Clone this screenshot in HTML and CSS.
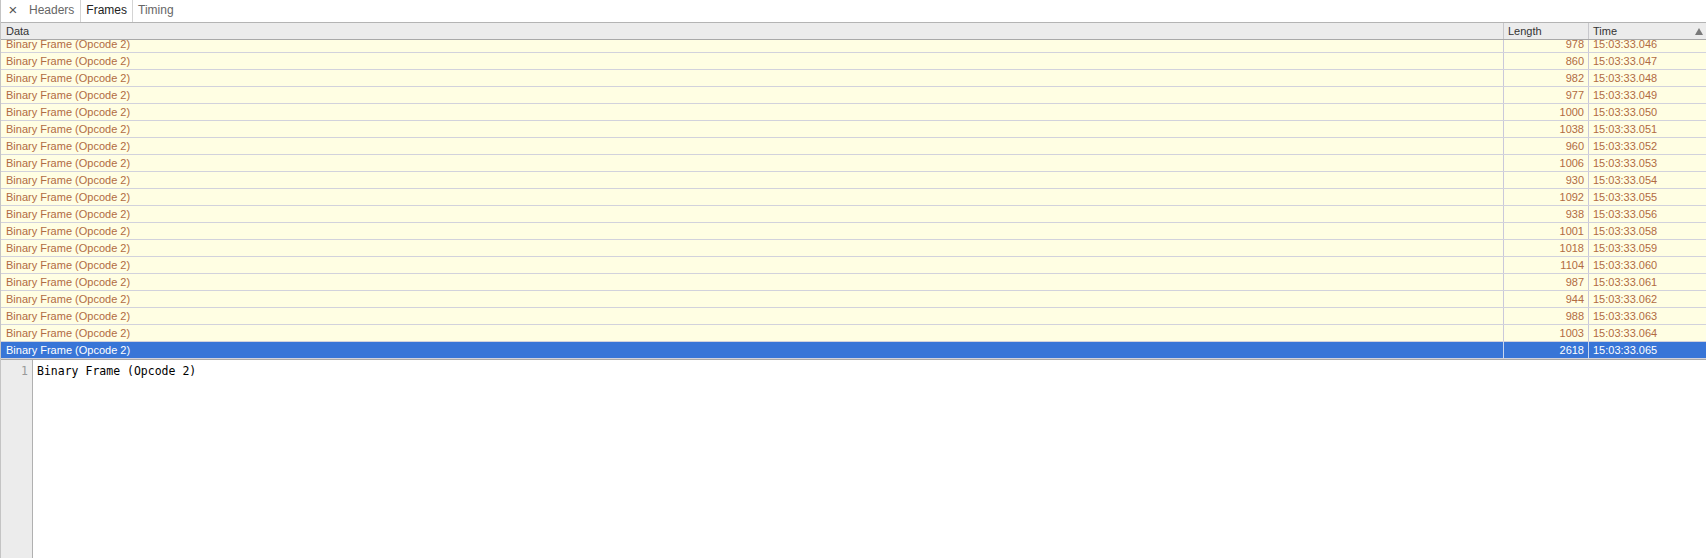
FILE: index.html
```html
<!DOCTYPE html>
<html>
<head>
<meta charset="utf-8">
<link rel="stylesheet" href="styles.css">
</head>
<body>
<div class="panel">
  <div class="tabbar">
    <span class="close">×</span>
    <span class="tab">Headers</span>
    <span class="tab tab-selected">Frames</span>
    <span class="tab">Timing</span>
  </div>
  <div class="table">
    <div class="thead">
      <div class="th th-data">Data</div>
      <div class="th col-len th-len">Length</div>
      <div class="th col-time th-time">Time<span class="sort"></span></div>
    </div>
    <div class="tbody">
      <div class="rows" id="rows"></div>
    </div>
  </div>
  <div class="editor">
    <div class="gutter"><div class="lineno">1</div></div>
    <div class="code"><div class="line">Binary Frame (Opcode 2)</div></div>
  </div>
</div>
<script src="script.js"></script>
</body>
</html>
```

FILE: script.js
```js
var data = [
  [978, "046"], [860, "047"], [982, "048"], [977, "049"], [1000, "050"],
  [1038, "051"], [960, "052"], [1006, "053"], [930, "054"], [1092, "055"],
  [938, "056"], [1001, "058"], [1018, "059"], [1104, "060"], [987, "061"],
  [944, "062"], [988, "063"], [1003, "064"], [2618, "065"]
];
var rows = document.getElementById("rows");
data.forEach(function (d, i) {
  var r = document.createElement("div");
  r.className = "row" + (i === data.length - 1 ? " selected" : "");
  r.innerHTML = '<div class="td td-data">Binary Frame (Opcode 2)</div>' +
    '<div class="td col-len num">' + d[0] + '</div>' +
    '<div class="td col-time">15:03:33.' + d[1] + '</div>';
  rows.appendChild(r);
});
```

FILE: styles.css
```css
html, body {
  margin: 0;
  padding: 0;
  background: #fff;
}
body {
  font-family: "Liberation Sans", Arial, sans-serif;
  width: 1706px;
  height: 558px;
  overflow: hidden;
}
.panel {
  height: 558px;
  display: flex;
  flex-direction: column;
  border-left: 1px solid #c4c4c4;
  box-sizing: border-box;
}
.tabbar {
  height: 22px;
  flex: none;
  display: flex;
  align-items: stretch;
  border-bottom: 1px solid #b4b4b4;
  font-size: 12px;
  line-height: 20px;
  color: #666;
}
.close {
  width: 20px;
  text-align: center;
  font-size: 15px;
  color: #555;
  padding-left: 2px;
}
.tab {
  padding: 0 5px;
  border-left: 1px solid transparent;
  border-right: 1px solid transparent;
}
.tab-selected {
  color: #222;
  border-left-color: #d4d4d4;
  border-right-color: #d4d4d4;
}
.tab-selected + .tab {
  border-left: none;
}
.table {
  flex: none;
  display: flex;
  flex-direction: column;
}
.thead, .row {
  display: grid;
  grid-template-columns: 1502px 85px 1fr;
}
.thead {
  height: 16px;
  background: #ececec;
  border-bottom: 1px solid #a9a9a9;
  font-size: 11px;
  line-height: 16px;
  color: #333;
}
.th {
  padding: 0 4px;
  box-sizing: border-box;
}
.th.col-len, .th.col-time {
  border-left: 1px solid #c8c8cc;
}
.th-time {
  display: flex;
  justify-content: space-between;
  align-items: center;
  padding-right: 3px;
}
.sort {
  width: 0;
  height: 0;
  border-left: 4px solid transparent;
  border-right: 4px solid transparent;
  border-bottom: 7px solid #7a7a7a;
}
.tbody {
  height: 319px;
  overflow: hidden;
}
.rows {
  margin-top: -4px;
}
.row {
  height: 16px;
  background: #fffee3;
  border-bottom: 1px solid #d2d2dc;
  font-size: 11px;
  line-height: 16px;
  color: #b16b42;
}
.td {
  padding: 0 4px;
  white-space: nowrap;
  overflow: hidden;
  box-sizing: border-box;
}
.th.th-data, .td.td-data {
  padding-left: 5px;
}
.td.col-len, .td.col-time {
  border-left: 1px solid #cac8da;
}
.num {
  text-align: right;
}
.row.selected {
  background: #3875d7;
  color: #fff;
}
.row.selected .td.col-len, .row.selected .td.col-time {
  border-left-color: #c8d6ee;
}
.editor {
  flex: 1;
  display: flex;
  border-top: 1px solid #a9a9a9;
  min-height: 0;
}
.gutter {
  width: 31px;
  flex: none;
  background: #ececec;
  border-right: 1px solid #b0b0b0;
  box-sizing: content-box;
  padding-top: 3px;
}
.lineno {
  font-family: "DejaVu Sans Mono", monospace;
  font-size: 11.5px;
  line-height: 16px;
  color: #999;
  text-align: right;
  padding-right: 4px;
}
.code {
  flex: 1;
  padding: 3px 0 0 4px;
}
.line {
  font-family: "DejaVu Sans Mono", monospace;
  font-size: 11.5px;
  line-height: 16px;
  color: #000;
  white-space: pre;
}
```
